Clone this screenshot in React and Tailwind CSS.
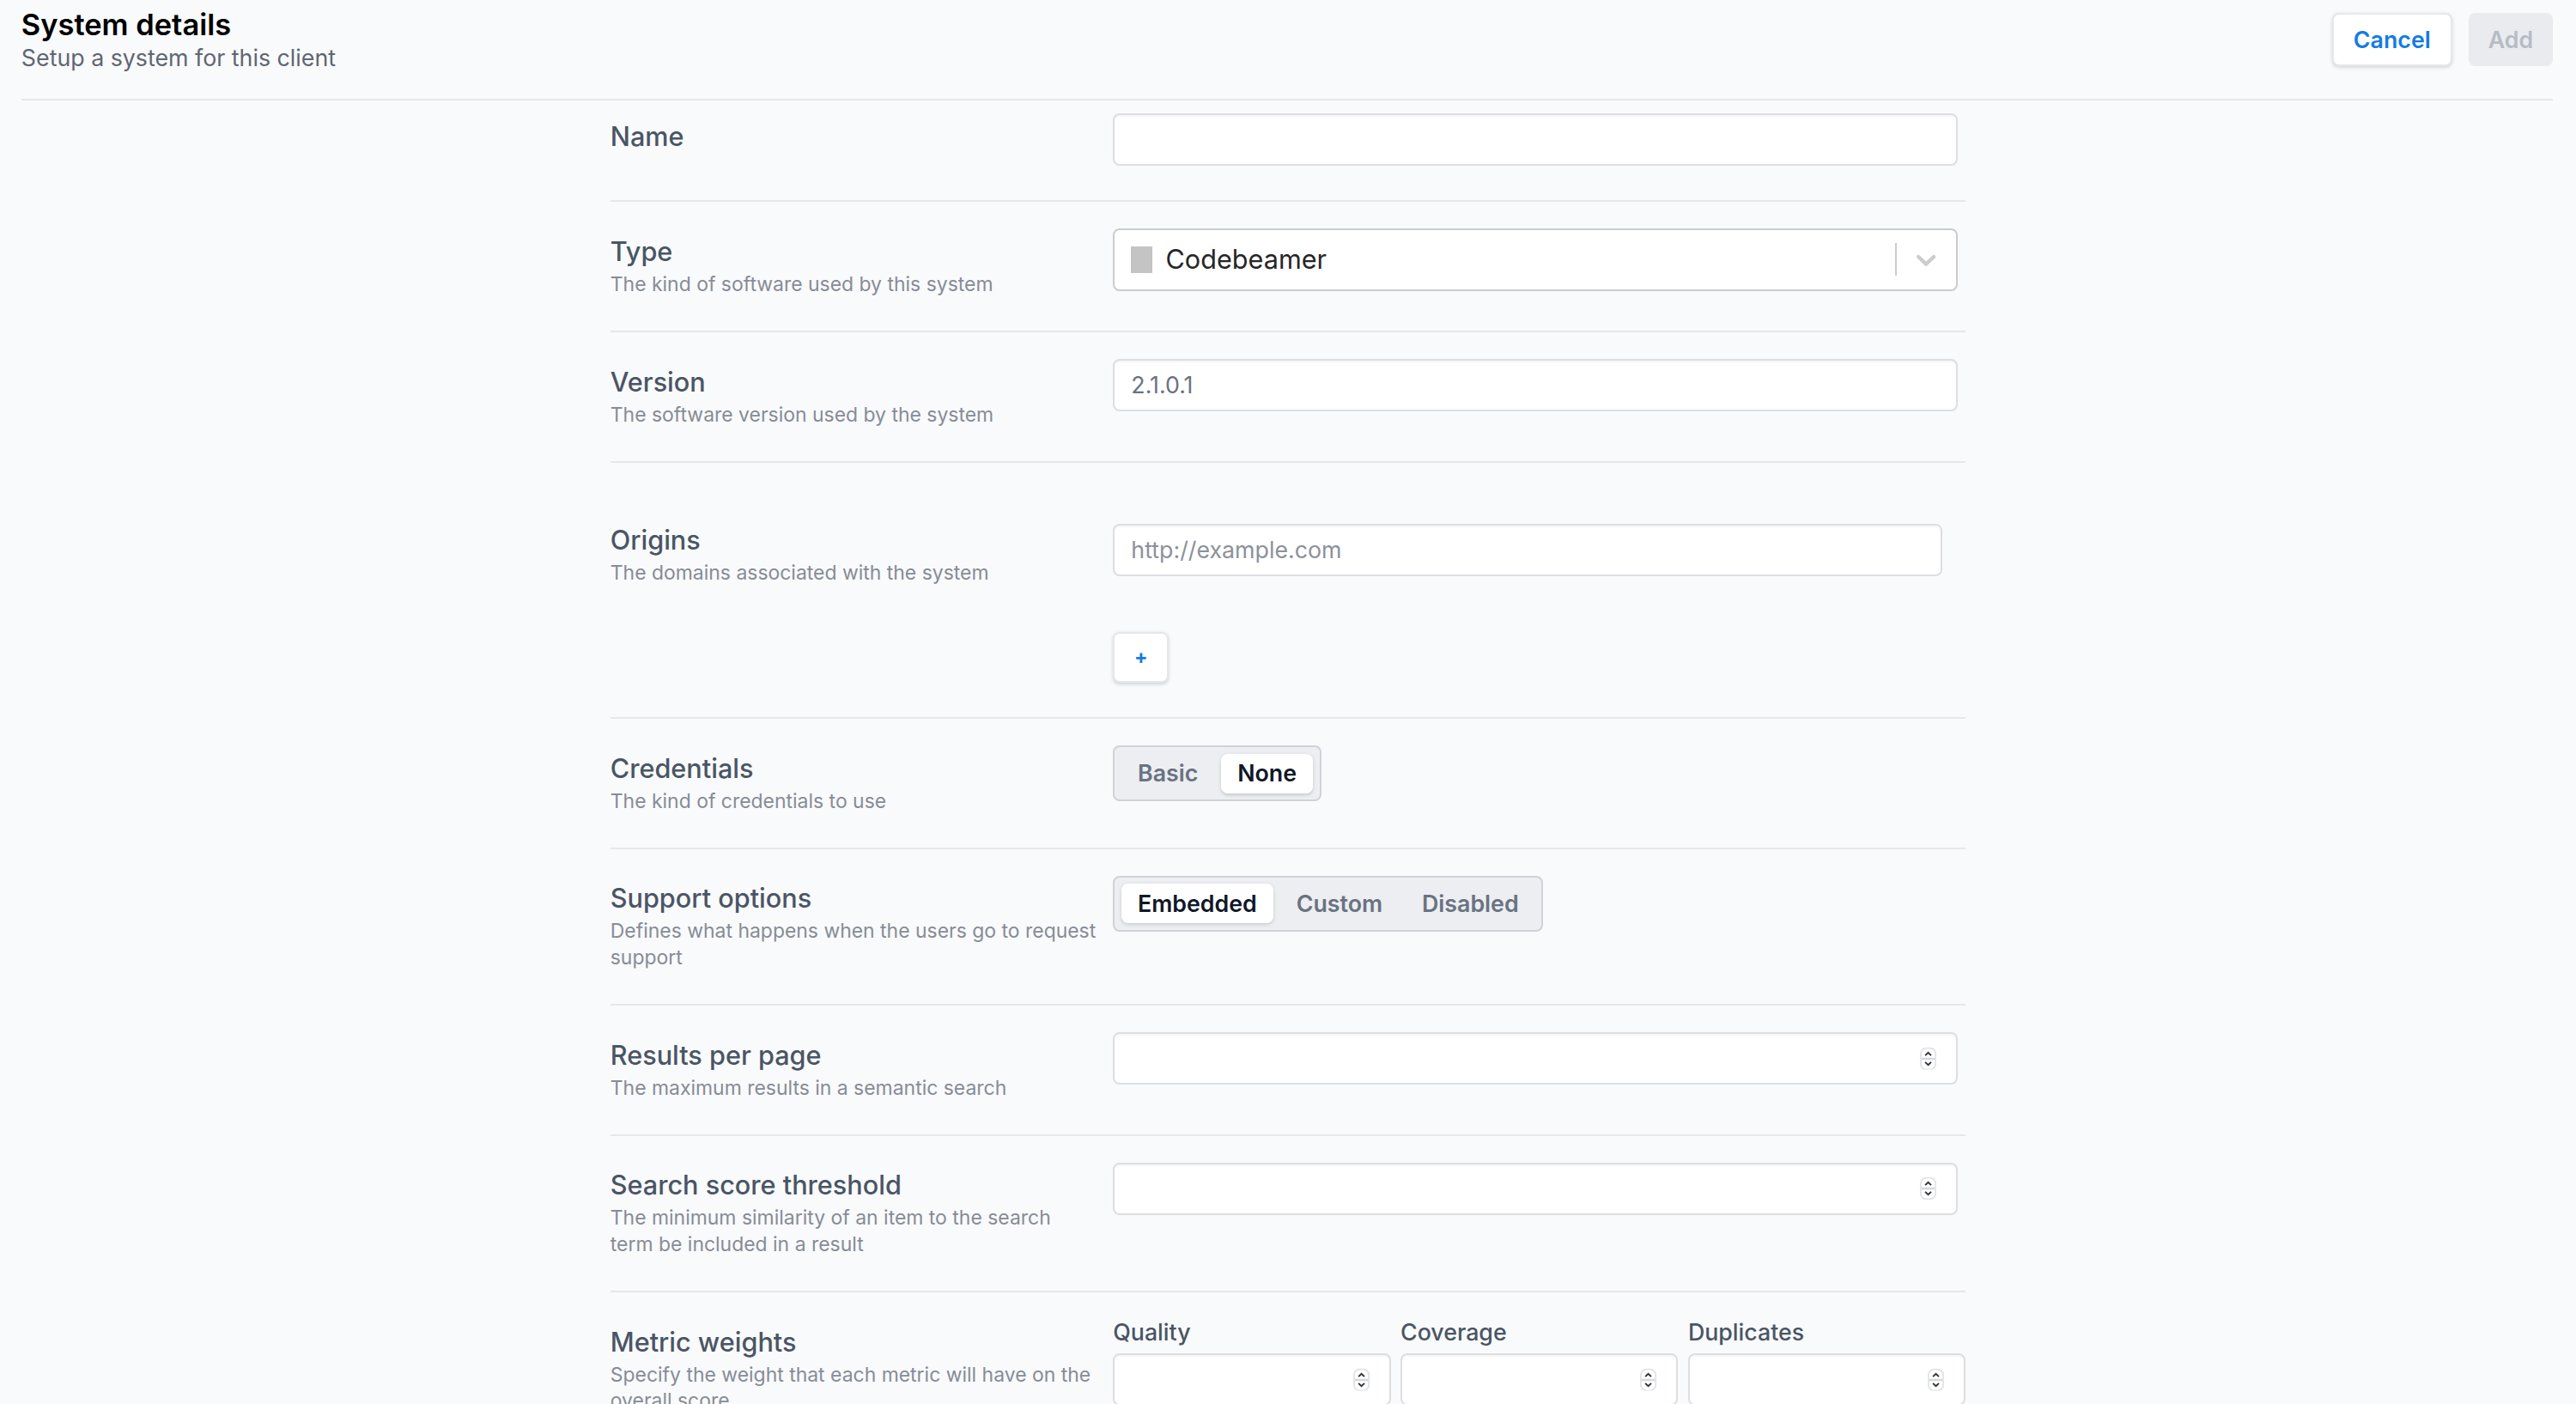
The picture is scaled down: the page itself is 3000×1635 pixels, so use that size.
import { useState } from 'react';

// react-select style chevron
function Chevron() {
    return (
        <svg viewBox="0 0 20 20" className="h-5 w-5 fill-[#cccccc]" aria-hidden="true">
            <path d="M4.516 7.548c0.436-0.446 1.043-0.481 1.576 0l3.908 3.747 3.908-3.747c0.533-0.481 1.141-0.446 1.574 0 0.436 0.445 0.408 1.197 0 1.615-0.406 0.418-4.695 4.502-4.695 4.502-0.217 0.223-0.502 0.335-0.787 0.335s-0.57-0.112-0.789-0.335c0 0-4.287-4.084-4.695-4.502s-0.436-1.17 0-1.615z" />
        </svg>
    );
}

function Spinner() {
    return (
        <svg viewBox="0 0 10 14" className="pointer-events-none absolute right-[13px] top-1/2 h-[14px] w-[10px] -translate-y-1/2" aria-hidden="true">
            <rect x="0.5" y="0.5" width="9" height="13" rx="3.5" fill="#fff" stroke="#e2e4e8" />
            <line x1="1" y1="7" x2="9" y2="7" stroke="#d4d7dc" strokeWidth="1.2" />
            <path d="M3.2 5 L5 3.2 L6.8 5" fill="none" stroke="#333" strokeWidth="1" />
            <path d="M3.2 9 L5 10.8 L6.8 9" fill="none" stroke="#333" strokeWidth="1" />
        </svg>
    );
}

// borders are 1.05px so they land on two device pixels at this zoom
function TextInput({ className = 'w-[514px]', ...props }) {
    return (
        <input
            type="text"
            className={`block h-[32px] rounded border-[1.05px] border-[#dcdee3] bg-white px-2.5 text-sm text-gray-500 shadow-[inset_0_1px_1px_rgba(0,0,0,0.04)] outline-none placeholder:text-[#8b919b] ${className}`}
            {...props}
        />
    );
}

function NumberInput({ className = 'w-[514px]' }) {
    return (
        <div className={`relative ${className}`}>
            <input
                type="text"
                inputMode="numeric"
                className="block h-[32px] w-full rounded border-[1.05px] border-[#dcdee3] bg-white px-2.5 text-sm text-gray-700 shadow-[inset_0_1px_1px_rgba(0,0,0,0.04)] outline-none"
            />
            <Spinner />
        </div>
    );
}

function Segmented({ options, value, onChange }) {
    return (
        <div className="inline-flex gap-1 rounded border-[1.05px] border-[#cfd3d9] bg-[#eceef1] p-1">
            {options.map((opt) => (
                <button
                    key={opt}
                    type="button"
                    onClick={() => onChange(opt)}
                    className={
                        opt === value
                            ? 'h-6 rounded-sm bg-white px-2.5 text-sm font-semibold text-gray-900 shadow-sm'
                            : 'h-6 rounded-sm px-2.5 text-sm font-semibold text-gray-500'
                    }
                >
                    {opt}
                </button>
            ))}
        </div>
    );
}

function Row({ label, description, children, className = 'pt-4 pb-[20.25px]', fieldClassName = '' }) {
    return (
        <div className={`flex items-start border-b-[1.05px] border-gray-200 ${className}`}>
            <div className="w-[306px] shrink-0 pt-0.5">
                <div className="text-base font-medium leading-6 text-gray-600">{label}</div>
                {description && (
                    <p className="w-[296.5px] text-xs leading-4 text-[#868c97]">{description}</p>
                )}
            </div>
            <div className={`flex-1 ${fieldClassName}`}>{children}</div>
        </div>
    );
}

export default function App() {
    const [credentials, setCredentials] = useState('None');
    const [support, setSupport] = useState('Embedded');

    return (
        <div className="min-h-screen bg-gray-50 [font-family:Inter,'Noto_Sans',sans-serif]">
            <div className="[zoom:1.9133]">
                <header className="ml-[13px] mr-[14px] flex items-start justify-between border-b-[1.05px] border-gray-200 pt-[5px] pb-[15px]">
                    <div>
                        <h1 className="text-lg font-semibold leading-5 text-black">System details</h1>
                        <p className="text-sm leading-5 text-[#5f6673]">Setup a system for this client</p>
                    </div>
                    <div className="mt-[3px] flex gap-2.5">
                        <button
                            type="button"
                            className="h-8 rounded border-[1.05px] border-gray-200 bg-white px-3 text-sm font-semibold text-[#137ce3] shadow-sm"
                        >
                            Cancel
                        </button>
                        <button
                            type="button"
                            disabled
                            className="h-8 rounded bg-[#e9ebef] px-3 text-sm font-semibold text-[#b6bcc6]"
                        >
                            Add
                        </button>
                    </div>
                </header>

                <form className="mx-auto w-[825px]">
                    <Row label="Name" className="pt-2 pb-[21px]">
                        <TextInput />
                    </Row>

                    <Row label="Type" description="The kind of software used by this system">
                        <div className="flex h-[38px] w-[514px] items-center rounded border-[1.05px] border-[#cccccc] bg-white">
                            <div className="flex flex-1 items-center gap-2 px-2">
                                <span className="ml-0.5 h-4 w-[13px] bg-[#c4c4c4]" />
                                <span className="text-base text-[#262626]">Codebeamer</span>
                            </div>
                            <span className="my-2 w-px self-stretch bg-[#cccccc]" />
                            <div className="p-2">
                                <Chevron />
                            </div>
                        </div>
                    </Row>

                    <Row label="Version" description="The software version used by the system">
                        <TextInput defaultValue="2.1.0.1" />
                    </Row>

                    <Row
                        label="Origins"
                        description="The domains associated with the system"
                        className="pt-[33px] pb-[21px]"
                        fieldClassName="mt-1"
                    >
                        <TextInput className="w-[505px]" placeholder="http://example.com" />
                        <button
                            type="button"
                            className="mt-[34px] flex h-[31px] w-[34px] items-center justify-center rounded border-[1.05px] border-gray-200 bg-white text-xs font-bold text-[#137ce3] shadow-sm"
                        >
                            +
                        </button>
                    </Row>

                    <Row label="Credentials" description="The kind of credentials to use">
                        <Segmented options={['Basic', 'None']} value={credentials} onChange={setCredentials} />
                    </Row>

                    <Row
                        label="Support options"
                        description="Defines what happens when the users go to request support"
                    >
                        <Segmented
                            options={['Embedded', 'Custom', 'Disabled']}
                            value={support}
                            onChange={setSupport}
                        />
                    </Row>

                    <Row label="Results per page" description="The maximum results in a semantic search">
                        <NumberInput />
                    </Row>

                    <Row
                        label="Search score threshold"
                        description="The minimum similarity of an item to the search term be included in a result"
                    >
                        <NumberInput />
                    </Row>

                    <Row
                        label="Metric weights"
                        description="Specify the weight that each metric will have on the overall score"
                    >
                        <div className="grid grid-cols-3 gap-1.5">
                            {['Quality', 'Coverage', 'Duplicates'].map((m) => (
                                <div key={m}>
                                    <div className="mb-[5px] text-sm font-medium leading-4 text-gray-600">{m}</div>
                                    <NumberInput className="w-full" />
                                </div>
                            ))}
                        </div>
                    </Row>
                </form>
            </div>
        </div>
    );
}
